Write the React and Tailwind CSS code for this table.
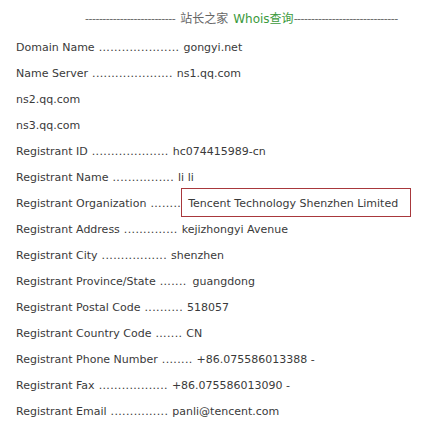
const rows = [
  { label: "Domain Name", dots: 21, value: "gongyi.net" },
  { label: "Name Server", dots: 21, value: "ns1.qq.com" },
  { label: "ns2.qq.com" },
  { label: "ns3.qq.com" },
  { label: "Registrant ID", dots: 20, value: "hc074415989-cn" },
  { label: "Registrant Name", dots: 16, value: "li li" },
  { label: "Registrant Organization", dots: 8, value: "Tencent Technology Shenzhen Limited", boxed: true },
  { label: "Registrant Address", dots: 14, value: "kejizhongyi Avenue" },
  { label: "Registrant City", dots: 17, value: "shenzhen" },
  { label: "Registrant Province/State", dots: 7, value: "guangdong", gap: "ml-[6px]" },
  { label: "Registrant Postal Code", dots: 10, value: "518057" },
  { label: "Registrant Country Code", dots: 7, value: "CN" },
  { label: "Registrant Phone Number", dots: 8, value: "+86.075586013388 -" },
  { label: "Registrant Fax", dots: 18, value: "+86.075586013090 -" },
  { label: "Registrant Email", dots: 15, value: "panli@tencent.com" },
];

export default function App() {
  return (
    <div
      className="w-[443px] h-[423px] bg-white overflow-hidden text-[11px] text-[#3a3a3a] pl-[16px]"
      style={{ fontFamily: '"DejaVu Sans", "Noto Sans CJK SC", sans-serif' }}
    >
      <div className="mt-[6px] h-[26px] flex items-center pl-[69px] text-[#666] whitespace-nowrap">
        <span className="tracking-[-0.5px]">{"-".repeat(26)}</span>
        <span className="ml-[5px] text-[12px]">站长之家</span>
        <span className="ml-[5px] text-[12px] text-[#3c9a3c]">Whois查询</span>
        <span className="tracking-[-0.5px]">{"-".repeat(30)}</span>
      </div>
      <div className="mt-[3px] flex flex-col">
        {rows.map((r, i) => (
          <div key={i} className="h-[26px] flex items-center whitespace-nowrap">
            <span>{r.label}</span>
            {r.dots ? <span className="ml-[4px] tracking-[0.35px]">{".".repeat(r.dots)}</span> : null}
            {r.value ? (
              r.boxed ? (
                <span className="border border-[#a8383c] px-[6px] pt-[3px] h-[29px] mb-[3px] flex items-center w-[230px]">
                  {r.value}
                </span>
              ) : (
                <span className={r.gap || "ml-[4px]"}>{r.value}</span>
              )
            ) : null}
          </div>
        ))}
      </div>
    </div>
  );
}
